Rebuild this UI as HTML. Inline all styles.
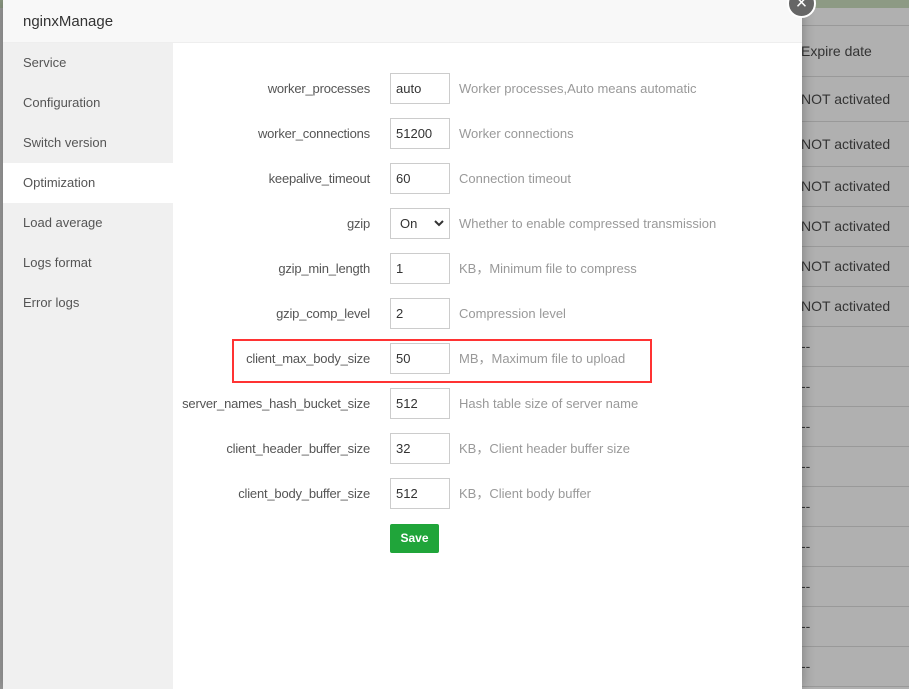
<!DOCTYPE html>
<html><head><meta charset="utf-8"><style>
*{box-sizing:border-box;margin:0;padding:0}
body{width:909px;height:689px;overflow:hidden;position:relative;background:#b2b2b2;font-family:"Liberation Sans",sans-serif;font-size:13px}
.bg{position:absolute;left:0;top:0;width:909px;height:689px;background:linear-gradient(90deg,#9c9c9c 0,#b0b0b0 30px,#b0b0b0 100%)}
.topg{position:absolute;left:0;top:0;width:909px;height:8px;background:#8d9a84}
.hl{position:absolute;left:800px;width:109px;height:1px;background:#999}
.ht{position:absolute;left:801px;color:#333;font-size:14px}
.dlg{position:absolute;left:3px;top:0;width:799px;height:689px;background:#fff;box-shadow:0 0 12px rgba(0,0,0,.3)}
.hd{height:43px;background:#f8f8f8;border-bottom:1px solid #eee;padding-left:20px;line-height:43px;font-size:15px;color:#333}
.side{position:absolute;left:0;top:43px;width:170px;bottom:0;background:#f0f0f0}
.side div{height:40px;line-height:40px;padding-left:20px;color:#555;font-size:13px}
.side .on{background:#fff}
.row{position:absolute;left:170px;height:31px;width:600px}
.lab{position:absolute;right:403px;top:0;line-height:31px;color:#555;white-space:nowrap;letter-spacing:-0.2px}
.inp{position:absolute;left:217px;top:0;width:60px;height:31px;border:1px solid #ccc;line-height:29px;padding-left:5px;color:#333}
.hint{position:absolute;left:286px;top:0;line-height:31px;color:#999;white-space:nowrap}
.red{position:absolute;left:229px;top:339px;width:420px;height:44px;border:2px solid #f33}
.save{position:absolute;left:387px;top:524px;width:49px;height:29px;background:#20a53a;color:#fff;font-weight:bold;font-size:12px;line-height:29px;text-align:center;border-radius:2px}
.close{position:absolute;left:787px;top:-11px;width:29px;height:29px;border-radius:50%;background:#666;border:2px solid #fff;color:#fff;text-align:center;line-height:25px;font-size:20px}
</style></head><body>
<div class="bg"></div><div class="topg"></div>
<div class="hl" style="top:25px"></div><div class="ht" style="top:43px">Expire date</div>
<div class="hl" style="top:76px"></div><div class="ht" style="top:91px">NOT activated</div>
<div class="hl" style="top:121px"></div><div class="ht" style="top:136px">NOT activated</div>
<div class="hl" style="top:166px"></div><div class="ht" style="top:178px">NOT activated</div>
<div class="hl" style="top:206px"></div><div class="ht" style="top:218px">NOT activated</div>
<div class="hl" style="top:246px"></div><div class="ht" style="top:258px">NOT activated</div>
<div class="hl" style="top:286px"></div><div class="ht" style="top:298px">NOT activated</div>
<div class="hl" style="top:326px"></div><div class="ht" style="top:338px">--</div>
<div class="hl" style="top:366px"></div><div class="ht" style="top:378px">--</div>
<div class="hl" style="top:406px"></div><div class="ht" style="top:418px">--</div>
<div class="hl" style="top:446px"></div><div class="ht" style="top:458px">--</div>
<div class="hl" style="top:486px"></div><div class="ht" style="top:498px">--</div>
<div class="hl" style="top:526px"></div><div class="ht" style="top:538px">--</div>
<div class="hl" style="top:566px"></div><div class="ht" style="top:578px">--</div>
<div class="hl" style="top:606px"></div><div class="ht" style="top:618px">--</div>
<div class="hl" style="top:646px"></div><div class="ht" style="top:658px">--</div>
<div class="hl" style="top:686px"></div>
<div class="dlg">
<div class="hd">nginxManage</div>
<div class="side"><div>Service</div><div>Configuration</div><div>Switch version</div><div class="on">Optimization</div><div>Load average</div><div>Logs format</div><div>Error logs</div></div>
<div class="row" style="top:73px"><span class="lab">worker_processes</span><span class="inp">auto</span><span class="hint">Worker processes,Auto means automatic</span></div>
<div class="row" style="top:118px"><span class="lab">worker_connections</span><span class="inp">51200</span><span class="hint">Worker connections</span></div>
<div class="row" style="top:163px"><span class="lab">keepalive_timeout</span><span class="inp">60</span><span class="hint">Connection timeout</span></div>
<div class="row" style="top:208px"><span class="lab">gzip</span><span class="inp" style="padding-left:9px">On<svg style="position:absolute;right:5px;top:11px" width="10" height="7" viewBox="0 0 10 7"><path d="M1 1l4 4 4-4" stroke="#333" stroke-width="2" fill="none"/></svg></span><span class="hint">Whether to enable compressed transmission</span></div>
<div class="row" style="top:253px"><span class="lab">gzip_min_length</span><span class="inp">1</span><span class="hint">KB，Minimum file to compress</span></div>
<div class="row" style="top:298px"><span class="lab">gzip_comp_level</span><span class="inp">2</span><span class="hint">Compression level</span></div>
<div class="row" style="top:343px"><span class="lab">client_max_body_size</span><span class="inp">50</span><span class="hint">MB，Maximum file to upload</span></div>
<div class="row" style="top:388px"><span class="lab">server_names_hash_bucket_size</span><span class="inp">512</span><span class="hint">Hash table size of server name</span></div>
<div class="row" style="top:433px"><span class="lab">client_header_buffer_size</span><span class="inp">32</span><span class="hint">KB，Client header buffer size</span></div>
<div class="row" style="top:478px"><span class="lab">client_body_buffer_size</span><span class="inp">512</span><span class="hint">KB，Client body buffer</span></div>
<div class="red"></div>
<div class="save">Save</div>
</div>
<div class="close">×</div>
</body></html>
